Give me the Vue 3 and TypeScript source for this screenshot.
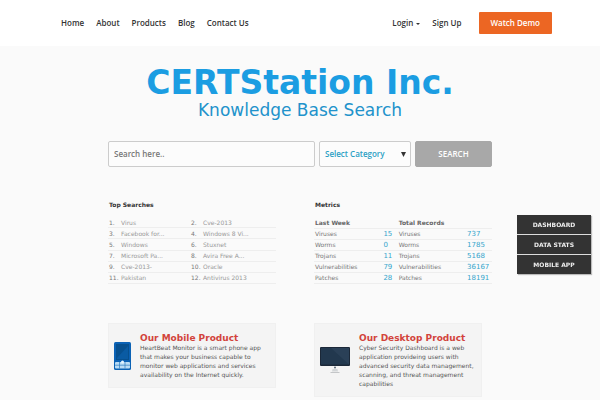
<script setup lang="ts">
import { ref } from 'vue'

interface Metric {
  name: string
  week: number
  total: number
}

const links: string[] = ['Home', 'About', 'Products', 'Blog', 'Contact Us']
const searches: string[] = [
  'Virus', 'Cve-2013',
  'Facebook for...', 'Windows 8 Vi...',
  'Windows', 'Stuxnet',
  'Microsoft Pa...', 'Avira Free A...',
  'Cve-2013-', 'Oracle',
  'Pakistan', 'Antivirus 2013',
]
const metrics: Metric[] = [
  { name: 'Viruses', week: 15, total: 737 },
  { name: 'Worms', week: 0, total: 1785 },
  { name: 'Trojans', week: 11, total: 5168 },
  { name: 'Vulnerabilities', week: 79, total: 36167 },
  { name: 'Patches', week: 28, total: 18191 },
]
const shortcuts: string[] = ['DASHBOARD', 'DATA STATS', 'MOBILE APP']
const query = ref('')
const category = ref('')
</script>

<template>
  <header class="top">
    <nav class="links main" aria-label="Main">
      <a v-for="l in links" :key="l" href="#">{{ l }}</a>
    </nav>
    <nav class="links" aria-label="Account">
      <a href="#">Login <span class="caret"></span></a>
      <a href="#">Sign Up</a>
      <a href="#" class="demo">Watch Demo</a>
    </nav>
  </header>

  <main class="page">
    <h1>CERTStation Inc.</h1>
    <p class="tagline">Knowledge Base Search</p>

    <form class="search" @submit.prevent>
      <input v-model="query" type="text" placeholder="Search here.." aria-label="Search" />
      <div class="picker">
        <select v-model="category" aria-label="Category">
          <option value="">Select Category</option>
        </select>
        <svg class="arrow" viewBox="0 0 5 5" aria-hidden="true"><path d="M0 0h5L2.5 5z" /></svg>
      </div>
      <button type="submit">SEARCH</button>
    </form>

    <div class="columns">
      <section>
        <h2>Top Searches</h2>
        <ol class="searches">
          <li v-for="(s, i) in searches" :key="s">
            <span class="num">{{ i + 1 }}.</span><a href="#">{{ s }}</a>
          </li>
        </ol>
      </section>
      <section>
        <h2>Metrics</h2>
        <table>
          <colgroup>
            <col class="col-name" />
            <col class="col-week" />
            <col class="col-name" />
            <col />
          </colgroup>
          <thead>
            <tr>
              <th colspan="2">Last Week</th>
              <th colspan="2">Total Records</th>
            </tr>
          </thead>
          <tbody>
            <tr v-for="m in metrics" :key="m.name">
              <td>{{ m.name }}</td>
              <td class="value">{{ m.week }}</td>
              <td>{{ m.name }}</td>
              <td class="value">{{ m.total }}</td>
            </tr>
          </tbody>
        </table>
      </section>
    </div>

    <div class="columns products">
      <article>
        <svg class="phone" viewBox="0 0 17 28" aria-hidden="true">
          <rect width="17" height="28" rx="1.5" fill="#0b62b5" />
          <rect x="2" y="2" width="13" height="16" fill="#07508f" />
          <path d="M3 16L14 4v13H3z" fill="#0a5ba3" />
          <rect x="1" y="20" width="15" height="6.5" rx="1" fill="#b9dcf5" />
          <path d="M1 23.2h15M5.5 20v6.5M11 20v6.5" stroke="#2f7dc0" stroke-width=".7" />
          <circle cx="8.5" cy="20" r="1.5" fill="#e6f5ff" />
        </svg>
        <div>
          <h3>Our Mobile Product</h3>
          <p>HeartBeat Monitor is a smart phone app that makes your business capable to monitor web applications and services availability on the Internet quickly.</p>
        </div>
      </article>
      <article>
        <svg class="desktop" viewBox="0 0 30 27" aria-hidden="true">
          <rect width="30" height="19" rx="1" fill="#1b2838" />
          <rect x="1" y="1" width="28" height="16.5" fill="#22384e" />
          <path d="M11 1h18v16.500z" fill="#2a4057" />
          <circle cx="15" cy="20.500" r=".9" fill="#4d5c6b" />
          <path d="M12.500 22h5l.5 2.500h-6z" fill="#d3d6d8" />
          <path d="M10.500 25h9v1h-9z" fill="#c4c6c8" />
        </svg>
        <div>
          <h3>Our Desktop Product</h3>
          <p>Cyber Security Dashboard is a web application provideing users with advanced security data management, scanning, and threat management capabilities</p>
        </div>
      </article>
    </div>
  </main>

  <nav class="shortcuts" aria-label="Shortcuts">
    <a v-for="s in shortcuts" :key="s" href="#">{{ s }}</a>
  </nav>
</template>

<style>
body {
  background: #fafafa;
  font-family: "DejaVu Sans", sans-serif;
}
</style>

<style scoped>
* {
  box-sizing: border-box;
}
a {
  color: inherit;
  text-decoration: none;
}
h1, h2, h3, p, ol {
  margin: 0;
  padding: 0;
}
.top {
  display: flex;
  justify-content: space-between;
  align-items: center;
  padding: 12px 8% 12px 10%;
  background: #fff;
  color: #333;
  font: 600 8px/22px "Open Sans", sans-serif;
}
.links {
  display: flex;
  align-items: center;
  gap: 12px;
}
.main {
  padding-left: 1px;
}
.caret {
  display: inline-block;
  margin-left: 1px;
  border: 2px solid transparent;
  border-top-color: #333;
  border-bottom: 0;
  vertical-align: middle;
}
.demo {
  margin-left: 5px;
  padding: 0 12px;
  border-radius: 1px;
  background: #ec6623;
  color: #fff;
}
.page {
  padding: 18px 18% 3px;
}
h1 {
  color: #1b9de2;
  font-size: 33px;
  line-height: 37px;
  text-align: center;
  white-space: nowrap;
}
.tagline {
  color: #2192cb;
  font-size: 17px;
  line-height: 18px;
  text-align: center;
}
.search {
  display: grid;
  grid-template-columns: 207fr 92fr 77fr;
  gap: 4px;
  margin-top: 22px;
}
.search input,
.search select,
.search button {
  width: 100%;
  height: 26px;
  padding: 0 5px 2px;
  border: 1px solid #ccc;
  border-radius: 2px;
  background: #fcfcfc;
  font: 600 8px "Open Sans", sans-serif;
}
.search input {
  color: #555;
}
.search input::placeholder {
  color: #777;
}
.picker {
  position: relative;
}
.search select {
  appearance: none;
  color: #2b9fc4;
}
.arrow {
  position: absolute;
  right: 5px;
  top: 11px;
  width: 5px;
  height: 5px;
  fill: #333;
  pointer-events: none;
}
.search button {
  border-color: #a8a8a8;
  background: #a8a8a8;
  color: #fff;
}
.columns {
  display: grid;
  grid-template-columns: 1fr 1fr;
  column-gap: 28px;
  margin-top: 33px;
}
h2 {
  padding-left: 1px;
  color: #333;
  font-size: 6px;
  line-height: 10px;
}
.searches {
  display: grid;
  grid-template-columns: 82fr 86fr;
  grid-template-rows: repeat(6, 1fr);
  height: 67px;
  margin: 7px 10px 0 0;
  color: #777;
  font-size: 6px;
  list-style: none;
}
.searches li {
  display: flex;
  align-items: center;
  padding-left: 1px;
  border-bottom: 1px solid #eee;
}
.num {
  flex: none;
  width: 12px;
}
.searches a {
  color: #999;
}
table {
  width: 100%;
  margin-top: 7px;
  border-spacing: 0;
  table-layout: fixed;
  color: #777;
  font-size: 6px;
  line-height: 10px;
}
.col-name {
  width: 39%;
}
.col-week {
  width: 8%;
}
th,
td {
  padding: 0 0 0 1px;
  border-bottom: 1px solid #eee;
  text-align: left;
  white-space: nowrap;
}
th {
  padding-top: 1px;
  color: #666;
}
.value {
  padding: 0;
  color: #35a5cc;
  font-size: 7px;
}
.products {
  align-items: start;
  margin-top: 39px;
}
article {
  display: flex;
  align-items: center;
  gap: 9px;
  margin-right: 10px;
  padding: 9px 4px 8px 5px;
  border: 1px solid #f0f0f0;
  background: #f4f4f4;
}
article svg {
  flex: none;
}
.phone {
  width: 17px;
  height: 28px;
}
.desktop {
  width: 30px;
  height: 27px;
}
h3 {
  color: #d2433b;
  font-size: 9px;
  line-height: 10px;
  white-space: nowrap;
}
article p {
  color: #555;
  font-size: 6px;
  line-height: 9px;
}
.shortcuts {
  position: fixed;
  top: 215px;
  right: 9px;
  display: grid;
  gap: 1px;
  width: 74px;
  background: #ddd;
  box-shadow: 1px 1px 1px #bbb;
}
.shortcuts a {
  background: #333;
  color: #eee;
  font-size: 6px;
  font-weight: 700;
  line-height: 19px;
  text-align: center;
}
</style>
